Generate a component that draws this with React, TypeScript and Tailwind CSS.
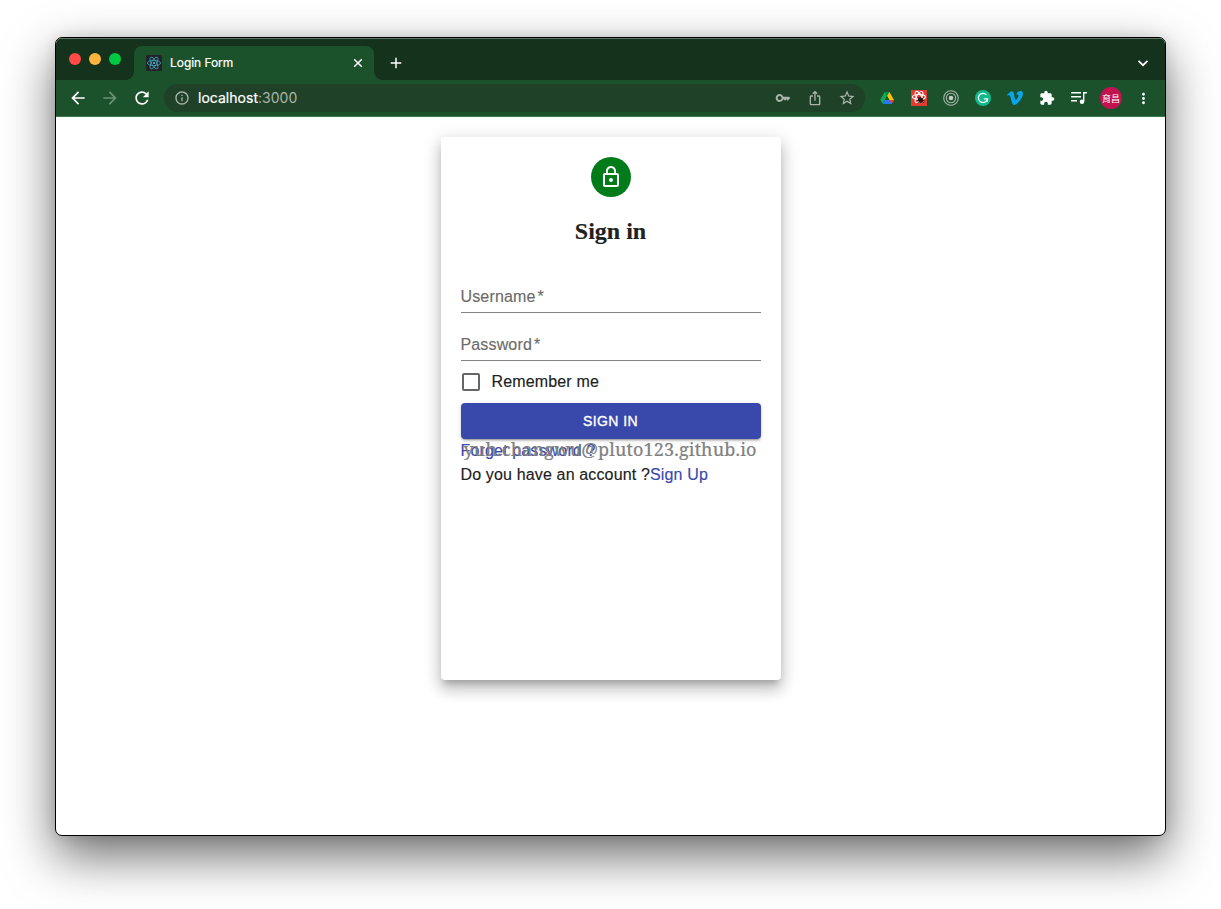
import React from 'react';
import {
  MdArrowBack,
  MdArrowForward,
  MdRefresh,
  MdOutlineInfo,
  MdKey,
  MdIosShare,
  MdStarBorder,
  MdExtension,
  MdMoreVert,
  MdAdd,
  MdLockOutline,
} from 'react-icons/md';

function ReactMark() {
  return (
    <svg viewBox="0 0 16 16" className="size-4" fill="none" stroke="#45b4d6" strokeWidth="0.7">
      <rect width="16" height="16" rx="1.5" fill="#222326" stroke="none" />
      <ellipse cx="8" cy="8" rx="6.6" ry="2.6" />
      <ellipse cx="8" cy="8" rx="6.6" ry="2.6" transform="rotate(60 8 8)" />
      <ellipse cx="8" cy="8" rx="6.6" ry="2.6" transform="rotate(120 8 8)" />
      <circle cx="8" cy="8" r="1.1" fill="#55c5e4" stroke="none" />
    </svg>
  );
}

function DriveIcon() {
  return (
    <svg viewBox="0 0 16 16" className="size-4">
      <path d="M5.6 2h4.8L8 6.2 3.7 13.8 1.2 9.7z" fill="#0fa958" />
      <path d="M5.6 2h4.8L8 6.2z" fill="#078840" />
      <path d="M10.4 2 15 9.9h-4.6L8 6.1z" fill="#fcc30b" />
      <path d="M5.8 9.9H15l-2.4 4.1h-9z" fill="#2578f4" />
      <path d="M10.4 9.9H15l-2.4 4.1z" fill="#ea4335" />
      <path d="M5.8 9.9 8 6.2l2.4 3.7z" fill="#1b522b" />
    </svg>
  );
}

function BugReactIcon() {
  return (
    <svg viewBox="0 0 16 16" className="size-4" fill="none" stroke="#fff" strokeWidth="1.1">
      <rect width="16" height="16" fill="#e23b32" stroke="none" />
      <ellipse cx="8" cy="7" rx="6.5" ry="2.5" />
      <ellipse cx="8" cy="7" rx="6.2" ry="2.5" transform="rotate(60 8 7)" />
      <ellipse cx="8" cy="7" rx="6.2" ry="2.5" transform="rotate(120 8 7)" />
      <ellipse cx="9.6" cy="10" rx="2.4" ry="3.2" transform="rotate(-35 9.6 10)" fill="#2a1512" stroke="none" />
      <path d="m6.5 7.5 6.5 5.5M12.5 7.5l-6 5.5M6 10.5h7.5" stroke="#2a1512" strokeWidth="0.8" />
    </svg>
  );
}

function TargetIcon() {
  return (
    <svg viewBox="0 0 16 16" className="size-4" fill="none" stroke="#a9b5ab" strokeWidth="1.1">
      <circle cx="8" cy="8" r="7.3" />
      <circle cx="8" cy="8" r="4.7" />
      <circle cx="8" cy="8" r="2.3" fill="#c5cdc6" stroke="none" />
    </svg>
  );
}

function GrammarIcon() {
  return (
    <svg viewBox="0 0 16 16" className="size-4" fill="none" stroke="#fff" strokeWidth="1.2">
      <circle cx="8" cy="8" r="8" fill="#12b98c" stroke="none" />
      <path d="M11.4 4.8A4.6 4.6 0 1 0 12.5 8.8H8.8M12.3 8.8v3" />
    </svg>
  );
}

function VimeoIcon() {
  return (
    <svg viewBox="0 0 24 24" className="size-4" fill="#08a5e8">
      <path d="M23.98 6.42c-.11 2.33-1.74 5.53-4.89 9.59-3.26 4.24-6.02 6.36-8.28 6.36-1.4 0-2.58-1.29-3.55-3.88L5.32 11.4C4.6 8.81 3.83 7.52 3.01 7.52c-.18 0-.81.38-1.88 1.13L0 7.2c1.18-1.04 2.35-2.08 3.5-3.12C5.08 2.72 6.27 2 7.05 1.93c1.87-.18 3.02 1.1 3.45 3.83.47 2.95.79 4.78.97 5.5.54 2.45 1.13 3.67 1.78 3.67.5 0 1.26-.8 2.27-2.39 1.01-1.6 1.55-2.81 1.62-3.64.14-1.38-.4-2.07-1.62-2.07-.58 0-1.17.13-1.78.4 1.18-3.87 3.44-5.75 6.77-5.64 2.47.07 3.63 1.68 3.48 4.83z" />
    </svg>
  );
}

function MediaIcon() {
  return (
    <svg viewBox="0 0 16 16" className="size-4" fill="none" stroke="#fff" strokeWidth="1.4">
      <path d="M0 2.7h10M0 6.7h10M0 10.7h6M12.7 11.5V2.7H16" />
      <circle cx="11" cy="11.7" r="2.2" fill="#fff" stroke="none" />
    </svg>
  );
}

function CloseIcon() {
  return (
    <svg viewBox="0 0 12 12" className="size-3" fill="none" stroke="#fff" strokeWidth="1.5">
      <path d="m2.2 2.2 7.6 7.6M9.8 2.2 2.2 9.8" />
    </svg>
  );
}

function ChevronIcon() {
  return (
    <svg viewBox="0 0 16 16" className="ml-auto mr-[14px] mt-4 size-4" fill="none" stroke="#fff" strokeWidth="1.7">
      <path d="m3.5 5.8 4.5 4.4 4.5-4.4" />
    </svg>
  );
}

function TabStrip() {
  return (
    <div className="flex h-[42px] shrink-0 border-t border-[#61766a] bg-[#14321c]">
      <div className="flex w-[78px] gap-2 pl-[13px] pt-[14px]">
        <span className="size-3 rounded-full bg-[#ff4a47]" />
        <span className="size-3 rounded-full bg-[#fdb43c]" />
        <span className="size-3 rounded-full bg-[#00c843]" />
      </div>
      <div className="relative mt-[7px] flex w-[240px] items-center rounded-t-lg bg-[#1b522b] pl-3 pr-[10px] text-white">
        <span className="absolute -left-2 bottom-0 size-2 bg-[radial-gradient(circle_at_0_0,#14321c_7.5px,#1b522b_8px)]" />
        <span className="absolute -right-2 bottom-0 size-2 bg-[radial-gradient(circle_at_100%_0,#14321c_7.5px,#1b522b_8px)]" />
        <ReactMark />
        <span className="ml-2 flex-1 font-['Inter',sans-serif] text-[12px] leading-4 tracking-[-0.05px] [-webkit-text-stroke:0.2px]">Login Form</span>
        <CloseIcon />
      </div>
      <MdAdd className="ml-[13px] mt-[15px] size-[18px] text-white" />
      <ChevronIcon />
    </div>
  );
}

function Toolbar() {
  return (
    <div className="flex h-[37px] shrink-0 items-center border-b border-[#3b7a4d] bg-[#1b522b] pl-3 text-white">
      <MdArrowBack className="size-5" />
      <MdArrowForward className="ml-3 size-5 text-[#6c9176]" />
      <MdRefresh className="ml-3 size-5" />
      <div className="ml-3 flex h-7 w-[701px] items-center rounded-full bg-[#1f4128] px-[10px] text-[#a9b5ab]">
        <MdOutlineInfo className="size-4" />
        <span className="ml-2 font-['Inter',sans-serif] text-[14px] leading-5 tracking-[0.02px]">
          <span className="text-white [-webkit-text-stroke:0.2px]">localhost</span>:3000
        </span>
        <MdKey className="ml-auto size-4" />
        <MdIosShare className="ml-4 size-4" />
        <MdStarBorder className="-mr-px ml-[15px] size-[18px]" />
      </div>
      <div className="ml-[14px] flex items-center gap-4">
        <DriveIcon />
        <BugReactIcon />
        <TargetIcon />
        <GrammarIcon />
        <VimeoIcon />
        <MdExtension className="size-4" />
        <MediaIcon />
        <span className="-mx-[3px] flex size-[22px] items-center justify-center rounded-full bg-[#c2134f] font-['Noto_Sans_CJK_TC',sans-serif] text-[9px] leading-none">
          育昌
        </span>
        <MdMoreVert className="size-[17px]" />
      </div>
    </div>
  );
}

function Field({ label }: { label: string }) {
  return (
    <div className="flex h-12 items-end border-b border-[#858585] pb-1 text-[#6b6b6b]">
      <span className="leading-[22px]">{label}<span className="ml-[2px]">*</span></span>
    </div>
  );
}

function LoginCard() {
  return (
    <div className="mx-auto mt-5 h-[543px] w-[340px] rounded bg-white p-5 font-['Liberation_Sans',Arial,sans-serif] text-base tracking-[0.15px] text-[#212121] shadow-[0_6px_6px_-3px_rgba(0,0,0,0.2),0_10px_14px_1px_rgba(0,0,0,0.14),0_4px_18px_3px_rgba(0,0,0,0.12)] [-webkit-text-stroke:0.15px]">
      <div className="flex flex-col items-center">
        <div className="flex size-10 items-center justify-center rounded-full bg-[#027b1b] text-white">
          <MdLockOutline className="size-6" />
        </div>
        <h2 className="mt-5 font-['Liberation_Serif',serif] text-2xl font-bold leading-7 tracking-normal">Sign in</h2>
      </div>
      <div className="mt-5">
        <Field label="Username" />
        <Field label="Password" />
      </div>
      <label className="flex h-[42px] items-center gap-3 pl-[1px]">
        <span className="size-[18px] rounded-[2px] border-2 border-[#666666]" />
        <span className="leading-6">Remember me</span>
      </label>
      <button className="flex h-9 w-full items-center justify-center rounded bg-[#3949ab] text-sm font-normal tracking-[0.4px] text-white shadow-[0_3px_1px_-2px_rgba(0,0,0,0.2),0_2px_2px_0_rgba(0,0,0,0.14),0_1px_5px_0_rgba(0,0,0,0.12)] [-webkit-text-stroke:0.35px]">
        SIGN IN
      </button>
      <div className="relative h-6 leading-6 text-[#3949ab]">
        Forget password ?
        <span className="absolute -top-0.5 left-[3px] whitespace-nowrap font-['Noto_Serif','Liberation_Serif',serif] text-[18px] leading-6 text-[#808080] [-webkit-text-stroke:0.2px]">
          yuh.changwu@pluto123.github.io
        </span>
      </div>
      <p className="leading-6">
        Do you have an account ?<a className="text-[#3949ab]">Sign Up</a>
      </p>
    </div>
  );
}

export default function App() {
  return (
    <div className="h-[909px] w-[1221px] overflow-hidden bg-white pl-[55px] pt-[37px]">
      <div className="flex h-[799px] w-[1111px] flex-col overflow-hidden rounded-[7px] border border-black bg-white shadow-[0_20px_50px_rgba(0,0,0,0.58),0_0_14px_rgba(0,0,0,0.12)]">
        <TabStrip />
        <Toolbar />
        <LoginCard />
      </div>
    </div>
  );
}
